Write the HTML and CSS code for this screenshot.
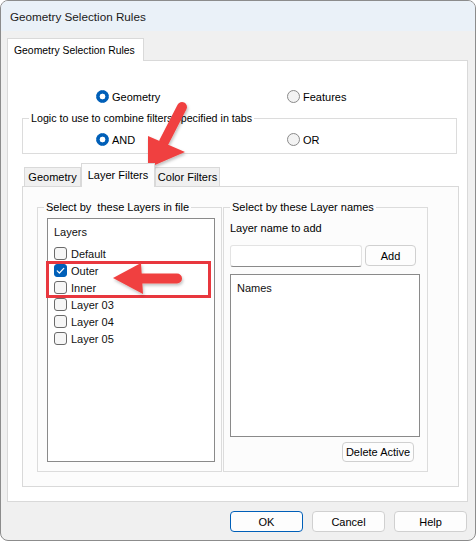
FILE: index.html
```html
<!DOCTYPE html>
<html>
<head>
<meta charset="utf-8">
<link rel="stylesheet" href="styles.css">
</head>
<body>
<div class="window">
  <div class="titlebar">Geometry Selection Rules</div>
  <div class="content">
    <div class="outer-strip">
      <div class="outer-tab">Geometry Selection Rules</div>
    </div>
    <div class="outer-panel">
      <div class="radio-row top-row">
        <div class="radio checked"><span class="rdot"></span>Geometry</div>
        <div class="radio"><span class="rdot"></span>Features</div>
      </div>
      <fieldset class="group logic">
        <legend>Logic to use to combine filters specified in tabs</legend>
        <div class="radio-row logic-row">
          <div class="radio checked"><span class="rdot"></span>AND</div>
          <div class="radio"><span class="rdot"></span>OR</div>
        </div>
      </fieldset>
      <div class="inner-strip">
        <div class="itab">Geometry</div>
        <div class="itab active">Layer Filters</div>
        <div class="itab">Color Filters</div>
      </div>
      <div class="inner-panel">
        <fieldset class="group layers-group">
          <legend>Select by&nbsp; these Layers in file</legend>
          <div class="group-body layers-body">
            <div class="listbox layers-list">
              <div class="list-head">Layers</div>
              <div class="check-row"><span class="cbox"></span>Default</div>
              <div class="check-row"><span class="cbox on"><svg width="13" height="13" viewBox="0 0 13 13"><path d="M3.2 6.8 L5.4 9 L9.8 4.4" fill="none" stroke="#fff" stroke-width="1.2" stroke-linecap="round" stroke-linejoin="round"/></svg></span>Outer</div>
              <div class="check-row"><span class="cbox"></span>Inner</div>
              <div class="check-row"><span class="cbox"></span>Layer 03</div>
              <div class="check-row"><span class="cbox"></span>Layer 04</div>
              <div class="check-row"><span class="cbox"></span>Layer 05</div>
            </div>
          </div>
        </fieldset>
        <fieldset class="group names-group">
          <legend>Select by these Layer names</legend>
          <div class="group-body names-body">
            <div class="field-label">Layer name to add</div>
            <div class="add-row">
              <div class="textbox"></div>
              <div class="btn add-btn">Add</div>
            </div>
            <div class="listbox names-list">
              <div class="list-head">Names</div>
            </div>
            <div class="delete-row">
              <div class="btn delete-btn">Delete Active</div>
            </div>
          </div>
        </fieldset>
      </div>
    </div>
    <div class="footer">
      <div class="btn footer-btn default">OK</div>
      <div class="btn footer-btn">Cancel</div>
      <div class="btn footer-btn">Help</div>
    </div>
  </div>
  <svg class="annot" width="476" height="541" viewBox="0 0 476 541">
    <defs>
      <filter id="sh" x="-20%" y="-20%" width="140%" height="140%">
        <feDropShadow dx="1" dy="2" stdDeviation="1.5" flood-color="#000" flood-opacity="0.25"/>
      </filter>
    </defs>
    <rect x="47.5" y="262.5" width="162" height="34" fill="none" stroke="#e8373e" stroke-width="3"/>
    <g filter="url(#sh)" fill="#f0403f">
      <line x1="182" y1="107" x2="164" y2="142" stroke="#f0403f" stroke-width="10" stroke-linecap="round"/>
      <polygon points="148,168 148,136 185,152"/>
      <line x1="136" y1="278.5" x2="177" y2="278.5" stroke="#f0403f" stroke-width="10" stroke-linecap="round"/>
      <polygon points="113,278 141,263 143,294"/>
    </g>
  </svg>
</div>
</body>
</html>
```
FILE: styles.css
```css
body {
  margin: 0;
  background: #ffffff;
}
.window {
  position: relative;
  width: 476px;
  height: 541px;
  box-sizing: border-box;
  border: 1px solid #8c8c8c;
  border-radius: 8px;
  overflow: hidden;
  background: #f0f0f0;
  font-family: "Liberation Sans", Arial, sans-serif;
  font-size: 11px;
  color: #000;
}
.titlebar {
  height: 30px;
  background: #eaf1f8;
  display: flex;
  align-items: center;
  padding-left: 9px;
  font-size: 11.7px;
  color: #1a1a1a;
}
.content {
  padding: 7px 7px 0 6px;
}
.outer-strip {
  display: flex;
  height: 22px;
}
.outer-tab {
  width: 137px;
  height: 23px;
  box-sizing: border-box;
  background: #fff;
  border: 1px solid #d9d9d9;
  border-bottom: none;
  position: relative;
  z-index: 1;
  padding-left: 6px;
  display: flex;
  align-items: center;
  font-size: 10.4px;
}
.outer-panel {
  border: 1px solid #d9d9d9;
  background: #fff;
  padding: 27px 8px 14px 14px;
}
.radio-row {
  display: grid;
  grid-template-columns: 191px auto;
  height: 17px;
  align-items: center;
}
.top-row {
  padding-left: 74px;
}
.radio {
  display: flex;
  align-items: center;
  gap: 3px;
  font-size: 11px;
}
.rdot {
  width: 13px;
  height: 13px;
  box-sizing: border-box;
  border-radius: 50%;
  border: 1px solid #8a8a8a;
  background: #f3f3f3;
}
.radio.checked .rdot {
  border-color: #005fb8;
  background: radial-gradient(circle, #fff 0 2.6px, #005fb8 3.2px);
}
fieldset.group {
  margin: 0;
  padding: 0;
  border: 1px solid #dcdcdc;
  min-width: 0;
}
fieldset.group legend {
  padding: 0 2px;
  margin-left: 6px;
  line-height: 14px;
  font-size: 11px;
}
fieldset.logic {
  margin-top: 6px;
  margin-right: 2px;
}
fieldset.logic legend {
  font-size: 10.7px;
}
.logic-row {
  padding-left: 73px;
  margin-top: 6px;
  margin-bottom: 5px;
}
.inner-strip {
  margin-top: 10px;
  height: 22px;
  display: flex;
  align-items: flex-end;
  padding-left: 2px;
}
.itab {
  height: 19px;
  box-sizing: border-box;
  border: 1px solid #d9d9d9;
  border-bottom: none;
  background: #f0f0f0;
  display: flex;
  align-items: center;
  justify-content: center;
  font-size: 11px;
}
.itab:nth-child(1) { width: 57px; }
.itab:nth-child(2) { width: 74px; }
.itab:nth-child(3) { width: 65px; }
.itab.active {
  height: 24px;
  margin-bottom: -1px;
  background: #fcfcfc;
  position: relative;
  z-index: 1;
  padding-bottom: 2px;
}
.inner-panel {
  border: 1px solid #d9d9d9;
  background: #fcfcfc;
  display: flex;
  gap: 1px;
  padding: 13px 0 14px 14px;
}
.layers-group {
  width: 185px;
  box-sizing: border-box;
}
.names-group {
  width: 205px;
  box-sizing: border-box;
}
.group-body {
  display: flex;
  flex-direction: column;
}
.layers-body {
  padding: 4px 6px 9px 9px;
}
.names-body {
  padding: 7px 7px 8px 6px;
}
.listbox {
  background: #fff;
  border: 1px solid #8a8a8a;
  box-sizing: border-box;
}
.layers-list {
  height: 244px;
  padding: 5px 0 0 6px;
}
.list-head {
  height: 17px;
  line-height: 17px;
  font-size: 11px;
  color: #111;
}
.layers-list .list-head {
  margin-bottom: 4px;
}
.check-row {
  height: 17px;
  display: flex;
  align-items: center;
  gap: 4px;
  font-size: 11px;
  color: #111;
}
.cbox {
  width: 13px;
  height: 13px;
  box-sizing: border-box;
  border: 1px solid #6a6a6a;
  border-radius: 3px;
  background: #f6f6f6;
  display: flex;
}
.cbox.on {
  background: #005fb8;
  border-color: #005fb8;
}
.cbox svg {
  margin: -1px;
}
.field-label {
  height: 14px;
  line-height: 14px;
  font-size: 11px;
}
.add-row {
  margin-top: 10px;
  display: flex;
  gap: 3px;
}
.textbox {
  width: 132px;
  height: 22px;
  box-sizing: border-box;
  background: #fff;
  border: 1px solid #e3e3e3;
  border-bottom: 1px solid #8a8a8a;
  border-radius: 3px;
}
.btn {
  box-sizing: border-box;
  background: #fdfdfd;
  border: 1px solid #d0d0d0;
  border-radius: 4px;
  display: flex;
  align-items: center;
  justify-content: center;
  font-size: 11px;
  color: #000;
}
.add-btn {
  width: 51px;
  height: 21px;
}
.names-list {
  margin-top: 7px;
  width: 190px;
  height: 163px;
  padding: 5px 0 0 6px;
}
.delete-row {
  margin-top: 5px;
  display: flex;
  justify-content: flex-end;
  padding-right: 6px;
}
.delete-btn {
  width: 72px;
  height: 20px;
}
.footer {
  margin-top: 9px;
  display: flex;
  justify-content: flex-end;
  gap: 9px;
  padding-right: 1px;
}
.footer-btn {
  width: 73px;
  height: 21px;
}
.footer-btn.default {
  border: 1px solid #005fb8;
}
.annot {
  position: absolute;
  left: -1px;
  top: -1px;
  pointer-events: none;
}
```
